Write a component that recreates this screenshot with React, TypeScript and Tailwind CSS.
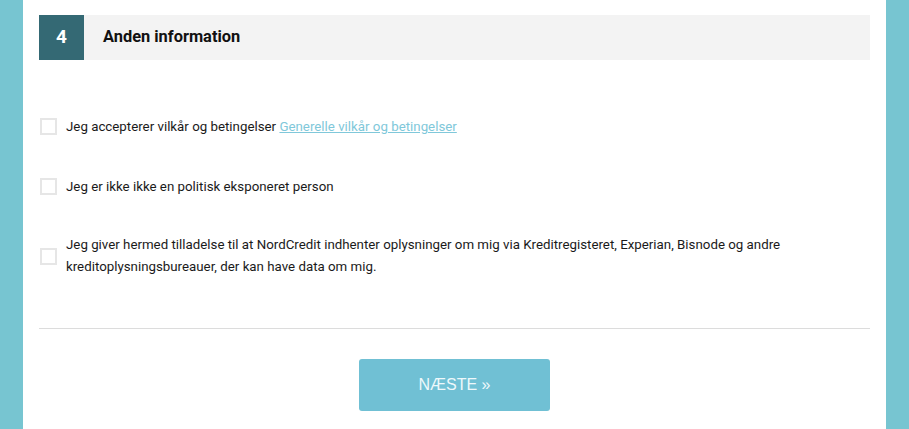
import React from "react";

function Box() {
  return <span className="block w-[17px] h-[17px] border-2 border-[#e6e6e6] bg-white shrink-0" />;
}

export default function App() {
  return (
    <div className="w-[909px] h-[429px] bg-[#77c5d1] px-[23px] overflow-hidden" style={{ fontFamily: "Roboto, 'Liberation Sans', sans-serif" }}>
      <div className="bg-white h-full px-4 pt-[15px]">
        <div className="flex h-[45px] bg-[#f3f3f3]">
          <div className="w-[45px] bg-[#346974] text-white flex items-center justify-center text-[19px] font-bold">4</div>
          <div className="flex items-center pl-[19px] text-[16.4px] font-bold text-[#111]">Anden information</div>
        </div>
        <div className="pt-[58px] text-[13.3px] text-[#1a1a1a] flex flex-col">
          <div className="flex items-center gap-[9px] pl-px h-[17px]">
            <Box />
            <span>
              Jeg accepterer vilkår og betingelser{" "}
              <a className="text-[#80c8da] underline" href="#">Generelle vilkår og betingelser</a>
            </span>
          </div>
          <div className="flex items-center gap-[9px] pl-px h-[17px] mt-[43px]">
            <Box />
            <span>Jeg er ikke ikke en politisk eksponeret person</span>
          </div>
          <div className="flex items-center gap-[9px] pl-px mt-[39px]">
            <Box />
            <span className="leading-[22px]">
              Jeg giver hermed tilladelse til at NordCredit indhenter oplysninger om mig via Kreditregisteret, Experian, Bisnode og andre
              <br />
              kreditoplysningsbureauer, der kan have data om mig.
            </span>
          </div>
        </div>
        <div className="border-t border-[#dcdcdc] mt-[50px]" />
        <div className="flex justify-center pt-[30px]">
          <button className="w-[191px] h-[52px] bg-[#70c0d4] rounded-[3px] text-[#eef8fb] text-[16px]" style={{ fontFamily: "'Liberation Sans', Arial, sans-serif" }}>
            NÆSTE »
          </button>
        </div>
      </div>
    </div>
  );
}
